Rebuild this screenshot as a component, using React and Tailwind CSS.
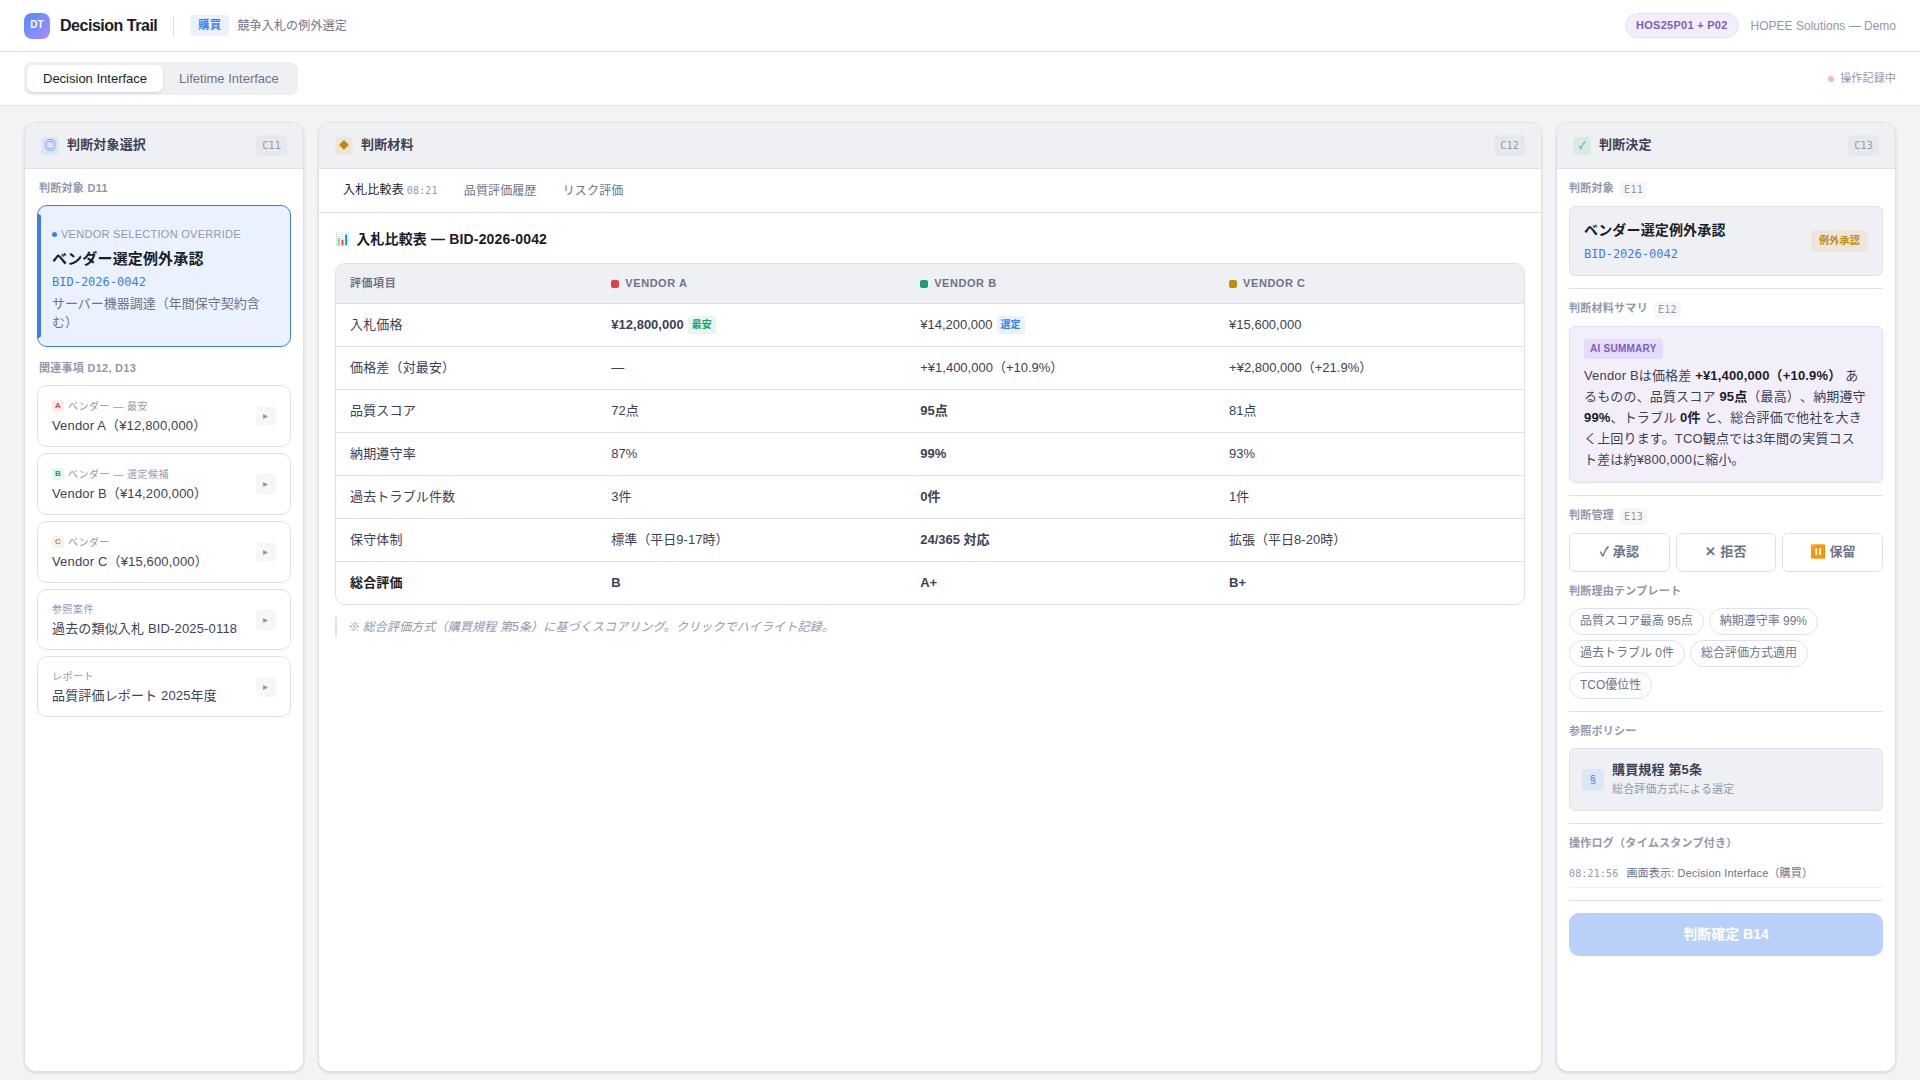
import React, { useState } from "react";

const vendors = [
  { name: "Vendor A", dot: "bg-[#dc4446]" },
  { name: "Vendor B", dot: "bg-[#1aa06c]" },
  { name: "Vendor C", dot: "bg-[#c28a0c]" },
];

const rows = [
  {
    label: "入札価格",
    cells: [
      { text: "¥12,800,000", bold: true, tag: "最安", tagStyle: "bg-[#e8f6f0] text-[#1aa06c]" },
      { text: "¥14,200,000", tag: "選定", tagStyle: "bg-[#ebf2ff] text-[#3b7df0]" },
      { text: "¥15,600,000" },
    ],
  },
  {
    label: "価格差（対最安）",
    cells: [{ text: "—" }, { text: "+¥1,400,000（+10.9%）" }, { text: "+¥2,800,000（+21.9%）" }],
  },
  { label: "品質スコア", cells: [{ text: "72点" }, { text: "95点", bold: true }, { text: "81点" }] },
  { label: "納期遵守率", cells: [{ text: "87%" }, { text: "99%", bold: true }, { text: "93%" }] },
  { label: "過去トラブル件数", cells: [{ text: "3件" }, { text: "0件", bold: true }, { text: "1件" }] },
  {
    label: "保守体制",
    cells: [
      { text: "標準（平日9-17時）" },
      { text: "24/365 対応", bold: true },
      { text: "拡張（平日8-20時）" },
    ],
  },
  {
    label: "総合評価",
    strong: true,
    cells: [
      { text: "B", bold: true },
      { text: "A+", bold: true },
      { text: "B+", bold: true },
    ],
  },
];

const related = [
  { badge: "A", badgeStyle: "bg-[#fdecec] text-[#dc4446]", kind: "ベンダー — 最安", title: "Vendor A（¥12,800,000）" },
  { badge: "B", badgeStyle: "bg-[#e8f6f0] text-[#1aa06c]", kind: "ベンダー — 選定候補", title: "Vendor B（¥14,200,000）" },
  { badge: "C", badgeStyle: "bg-[#faf3e3] text-[#c28a0c]", kind: "ベンダー", title: "Vendor C（¥15,600,000）" },
  { kind: "参照案件", title: "過去の類似入札 BID-2025-0118" },
  { kind: "レポート", title: "品質評価レポート 2025年度" },
];

const reasons = [
  "品質スコア最高 95点",
  "納期遵守率 99%",
  "過去トラブル 0件",
  "総合評価方式適用",
  "TCO優位性",
];

const mono = "font-['DejaVu_Sans_Mono','Noto_Sans_CJK_JP',monospace]";

function Panel({ icon, iconStyle, title, code, children }) {
  return (
    <section className="flex min-w-0 flex-col overflow-hidden rounded-xl border border-[#dfe1e8] bg-white shadow-sm">
      <header className="flex items-center border-b border-[#dfe1e8] bg-[#eff0f4] px-4 py-3">
        <span className={`flex size-[18px] items-center justify-center rounded leading-none ${iconStyle}`}>
          {icon}
        </span>
        <h2 className="ml-2 self-start text-[13px] leading-[19px] font-semibold text-[#3d4155]">{title}</h2>
        <span
          className={`ml-auto rounded bg-black/3 px-1.5 py-[3px] text-[10px] leading-[15px] tracking-wide text-[#9298ab] ${mono}`}
        >
          {code}
        </span>
      </header>
      {children}
    </section>
  );
}

function Label({ children, code }) {
  return (
    <h3
      className={`mb-2 flex items-start gap-1.5 text-[11px] leading-[15px] font-semibold tracking-wide text-[#9298ab] ${
        code ? "h-[17px]" : "h-4"
      }`}
    >
      {children}
      {code && (
        <span className={`rounded-[3px] bg-black/3 px-1 py-px text-[10px] leading-[15px] font-medium ${mono}`}>
          {code}
        </span>
      )}
    </h3>
  );
}

function Rule() {
  return <hr className="my-3 border-t border-[#dfe1e8]" />;
}

export default function App() {
  const [view, setView] = useState("decision");
  const [tab, setTab] = useState(0);

  const viewTab = (id, text) => (
    <button
      type="button"
      role="tab"
      aria-selected={view === id}
      onClick={() => setView(id)}
      className={`rounded-md px-4 py-1 text-[13px] leading-[19px] tracking-normal ${
        view === id ? "bg-white text-[#1a1d27] shadow-sm" : "text-[#6e7388]"
      }`}
    >
      {text}
    </button>
  );

  return (
    <div className="flex min-h-screen flex-col bg-[#f3f4f6] font-['Liberation_Sans','Noto_Sans_CJK_JP',sans-serif] tracking-[0.01em] text-[#3d4155] [text-spacing-trim:space-all]">
      <header className="flex h-[52px] items-center border-b border-[#dfe1e8] bg-white px-6 shadow-xs">
        <div className="flex size-[26px] items-center justify-center rounded-lg bg-linear-135 from-[#4a8cff] to-[#a78bfa] pb-0.5 text-[10px] leading-none font-bold tracking-normal text-white">
          DT
        </div>
        <h1 className="ml-2.5 text-[16px] font-bold tracking-[-0.03em] text-[#1a1d27]">Decision Trail</h1>
        <span className="mx-4 h-5 w-px bg-[#dfe1e8]" />
        <span className="rounded bg-[#ebf2ff] px-2 py-0.5 text-[11px] leading-[17px] font-semibold tracking-wider text-[#3b7df0]">
          購買
        </span>
        <span className="ml-2 text-[12px] text-[#6e7388]">競争入札の例外選定</span>
        <span className="ml-auto rounded-full border border-[#e4dff8] bg-[#f2effa] px-2.5 py-[3px] text-[11px] leading-[17px] font-semibold tracking-wide text-[#7e5bc4]">
          HOS25P01 + P02
        </span>
        <span className="ml-3 text-[12px] tracking-normal text-[#9298ab]">HOPEE Solutions — Demo</span>
      </header>

      <nav className="flex items-center border-b border-[#dfe1e8] bg-white px-6 py-2.5">
        <div role="tablist" className="flex rounded-lg bg-[#eff0f4] p-[3px]">
          {viewTab("decision", "Decision Interface")}
          {viewTab("lifetime", "Lifetime Interface")}
        </div>
        <span className="ml-auto flex items-center gap-1.5 text-[11px] text-[#9298ab]">
          <span className="size-1.5 rounded-full bg-[#f1b8ba]" />
          操作記録中
        </span>
      </nav>

      <main className="grid flex-1 grid-cols-[280px_1fr_340px] gap-3.5 px-6 pt-4 pb-2">
        <Panel icon="◎" iconStyle="bg-[#dde6f7] text-[12px] text-[#3b7df0]" title="判断対象選択" code="C11">
          <div className="flex flex-col p-3">
            <div className="pl-0.5">
              <Label>判断対象 D11</Label>
            </div>
            <article className="relative rounded-[10px] border border-[#3b7df0] bg-[#ebf2ff] px-3.5 pt-5 pb-3.5">
              <span className="absolute inset-y-2 -left-px w-1 rounded-r-[3px] bg-[#3b7df0]" />
              <p className="flex items-center gap-1 text-[11px] leading-4 tracking-wide text-[#9298ab] uppercase">
                <span className="size-[5px] rounded-full bg-[#3b7df0]" />
                Vendor Selection Override
              </p>
              <h4 className="mt-1.5 text-[15px] leading-[22px] font-bold text-[#1a1d27]">ベンダー選定例外承認</h4>
              <p className={`mt-[3px] text-[12px] leading-[18px] tracking-normal text-[#3b7df0] ${mono}`}>
                BID-2026-0042
              </p>
              <p className="mt-[3px] text-[13px] leading-[19px] tracking-normal text-[#6e7388]">
                サーバー機器調達（年間保守契約含む）
              </p>
            </article>

            <div className="mt-3.5 pl-0.5">
              <Label>関連事項 D12, D13</Label>
            </div>
            <ul className="flex flex-col gap-1.5">
              {related.map((r) => (
                <li
                  key={r.title}
                  className="flex items-center rounded-[10px] border border-[#dfe1e8] bg-white px-3.5 py-2.5"
                >
                  <div className="min-w-0 flex-1">
                    <p
                      className={`flex items-center gap-1 text-[10px] tracking-wider text-[#9298ab] ${
                        r.badge ? "h-5" : "h-[19px]"
                      }`}
                    >
                      {r.badge && (
                        <span
                          className={`flex size-3 items-center justify-center rounded-[3px] text-[8px] leading-none font-bold tracking-normal ${r.badgeStyle}`}
                        >
                          {r.badge}
                        </span>
                      )}
                      {r.kind}
                    </p>
                    <p className="text-[13px] leading-5 text-[#3d4155]">{r.title}</p>
                  </div>
                  <button
                    type="button"
                    aria-label={`${r.title} を開く`}
                    className="flex size-5 items-center justify-center rounded bg-black/3 text-[10px] leading-none text-[#9298ab]"
                  >
                    ▸
                  </button>
                </li>
              ))}
            </ul>
          </div>
        </Panel>

        <Panel icon="◆" iconStyle="bg-[#ece6dd] text-[10px] text-[#c28a0c]" title="判断材料" code="C12">
          <div role="tablist" className="flex h-11 items-center gap-0.5 border-b border-[#dfe1e8] px-3">
            {["入札比較表", "品質評価履歴", "リスク評価"].map((t, i) => (
              <button
                key={t}
                type="button"
                role="tab"
                aria-selected={tab === i}
                onClick={() => setTab(i)}
                className={`px-3 text-[12px] leading-[18px] ${tab === i ? "text-[#1a1d27]" : "text-[#6e7388]"}`}
              >
                {t}
                {i === 0 && <span className={`ml-[3px] text-[10px] text-[#9298ab] ${mono}`}>08:21</span>}
              </button>
            ))}
          </div>
          <div className="p-4">
            <h3 className="mb-[13px] flex items-center gap-1.5 text-[14px] leading-[21px] font-bold text-[#1a1d27]">
              <span className="text-[12px]">📊</span>
              入札比較表 — BID-2026-0042
            </h3>
            <div className="overflow-hidden rounded-[10px] border border-[#dfe1e8]">
              <table className="w-full table-fixed border-collapse text-left text-[13px] leading-5">
                <thead>
                  <tr className="border-b border-[#dfe1e8] bg-[#eff0f4] text-[11px] leading-[17px] tracking-wider text-[#6e7388] uppercase">
                    <th className="w-[22%] px-3.5 py-[11px] font-semibold">評価項目</th>
                    {vendors.map((v) => (
                      <th key={v.name} className="w-[26%] px-3.5 py-[11px] font-semibold">
                        <span className="flex items-center gap-1.5">
                          <span className={`size-2 rounded-xs ${v.dot}`} />
                          {v.name}
                        </span>
                      </th>
                    ))}
                  </tr>
                </thead>
                <tbody>
                  {rows.map((r) => (
                    <tr key={r.label} className="border-b border-[#dfe1e8] last:border-b-0">
                      <th
                        className={`px-3.5 py-[11px] ${r.strong ? "font-bold text-[#1a1d27]" : "font-normal"}`}
                        scope="row"
                      >
                        {r.label}
                      </th>
                      {r.cells.map((c, i) => (
                        <td key={i} className={`px-3.5 py-[11px] tracking-normal ${c.bold ? "font-semibold" : ""}`}>
                          <span className="flex items-center">
                            {c.text}
                            {c.tag && (
                              <span
                                className={`ml-1 rounded-[3px] px-1 py-px text-[10px] leading-4 font-semibold ${c.tagStyle}`}
                              >
                                {c.tag}
                              </span>
                            )}
                          </span>
                        </td>
                      ))}
                    </tr>
                  ))}
                </tbody>
              </table>
            </div>
            <p className="mt-3 border-l-2 border-[#dfe1e8] pl-2.5 text-[12px] leading-5 text-[#9298ab] italic">
              ※ 総合評価方式（購買規程 第5条）に基づくスコアリング。クリックでハイライト記録。
            </p>
          </div>
        </Panel>

        <Panel icon="✓" iconStyle="bg-[#daebe6] text-[10px] text-[#1aa06c]" title="判断決定" code="C13">
          <div className="p-3">
            <Label code="E11">判断対象</Label>
            <div className="flex items-center justify-between rounded-md border border-[#dfe1e8] bg-[#eff0f4] px-3.5 py-3">
              <div>
                <p className="text-[14px] leading-[22px] font-bold text-[#1a1d27]">ベンダー選定例外承認</p>
                <p className={`mt-1 text-[12px] leading-[18px] tracking-normal text-[#3b7df0] ${mono}`}>
                  BID-2026-0042
                </p>
              </div>
              <span className="rounded bg-[#ece6dd] px-2 py-[3px] text-[10px] leading-4 font-semibold tracking-wide text-[#c28a0c]">
                例外承認
              </span>
            </div>
            <Rule />

            <Label code="E12">判断材料サマリ</Label>
            <div className="rounded-md border border-[#e4dff8] bg-[#f2effa] px-3.5 py-3">
              <p className="mb-1.5 w-fit rounded-[3px] bg-[#e4dcf8] px-1.5 py-[3px] text-[10px] leading-[14px] font-bold tracking-wide text-[#7e5bc4]">
                AI SUMMARY
              </p>
              <p className="text-[13px] leading-[21px]">
                Vendor Bは価格差 <strong className="text-[#1a1d27]">+¥1,400,000（+10.9%）</strong>{" "}
                あるものの、品質スコア <strong className="text-[#1a1d27]">95点</strong>（最高）、納期遵守{" "}
                <strong className="text-[#1a1d27]">99%</strong>、トラブル{" "}
                <strong className="text-[#1a1d27]">0件</strong>{" "}
                と、総合評価で他社を大きく上回ります。TCO観点では3年間の実質コスト差は約¥800,000に縮小。
              </p>
            </div>
            <Rule />

            <Label code="E13">判断管理</Label>
            <div className="mb-3 grid grid-cols-3 gap-1.5">
              {["✓ 承認", "✕ 拒否", "⏸️ 保留"].map((t) => (
                <button
                  key={t}
                  type="button"
                  className="h-[39px] rounded-md border border-[#dfe1e8] bg-white pb-0.5 text-[13px] leading-5 font-semibold text-[#6e7388]"
                >
                  {t}
                </button>
              ))}
            </div>
            <Label>判断理由テンプレート</Label>
            <div className="flex flex-wrap gap-[5px]">
              {reasons.map((t) => (
                <button
                  key={t}
                  type="button"
                  className="rounded-full border border-[#dfe1e8] bg-white px-2.5 py-1 text-[12px] leading-[17px] tracking-normal text-[#6e7388]"
                >
                  {t}
                </button>
              ))}
            </div>
            <Rule />

            <Label>参照ポリシー</Label>
            <div className="flex items-center gap-2 rounded-md border border-[#dfe1e8] bg-[#eff0f4] px-3 py-[11px]">
              <span className="flex size-[22px] items-center justify-center rounded bg-[#dde6f7] text-[11px] leading-none text-[#3b7df0]">
                §
              </span>
              <div>
                <p className="text-[13px] leading-5 font-semibold">購買規程 第5条</p>
                <p className="text-[11px] leading-[19px] text-[#9298ab]">総合評価方式による選定</p>
              </div>
            </div>
            <Rule />

            <Label>操作ログ（タイムスタンプ付き）</Label>
            <ul>
              <li className="flex items-baseline gap-2 border-b border-[#eff0f4] py-[5px] text-[11px] leading-4 text-[#6e7388]">
                <time className={`text-[10px] text-[#9298ab] ${mono}`}>08:21:56</time>
                画面表示: Decision Interface（購買）
              </li>
            </ul>
            <Rule />

            <button
              type="button"
              disabled
              className="h-[43px] w-full rounded-[10px] bg-[#b9d1f8] text-[14px] font-bold tracking-normal text-white"
            >
              判断確定 B14
            </button>
          </div>
        </Panel>
      </main>
    </div>
  );
}
